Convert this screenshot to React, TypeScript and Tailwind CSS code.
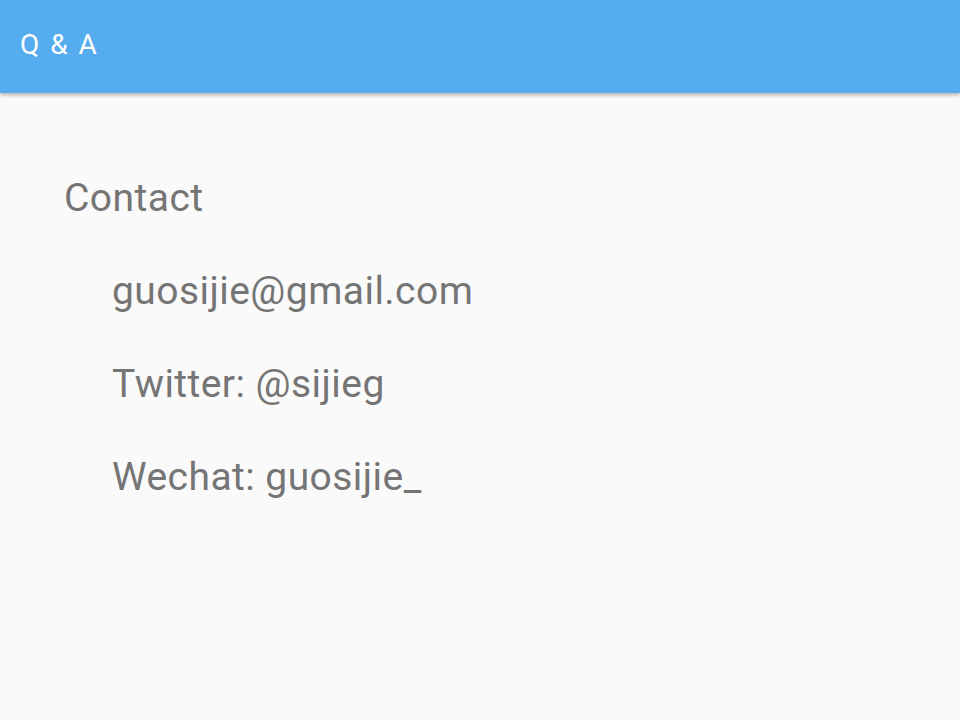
const items = ["guosijie@gmail.com", "Twitter: @sijieg", "Wechat: guosijie_"];

export default function App() {
  return (
    <div className="flex h-[720px] w-[960px] flex-col bg-[#fafafa] font-['Roboto',sans-serif]">
      <header className="relative z-10 flex h-[93px] shrink-0 items-center bg-[#55acee] px-5 pb-1 shadow-[0_2px_4px_rgba(0,0,0,0.3)]">
        <h1 className="text-[28px] leading-none tracking-[2px] text-white">Q &amp; A</h1>
      </header>

      <main className="flex flex-col pt-[59px] text-[39px] tracking-[0.45px] text-[#757575]">
        <div className="flex h-[93px] items-center pl-16">Contact</div>
        {items.map((item) => (
          <div key={item} className="flex h-[93px] items-center pl-28">
            {item}
          </div>
        ))}
      </main>
    </div>
  );
}
